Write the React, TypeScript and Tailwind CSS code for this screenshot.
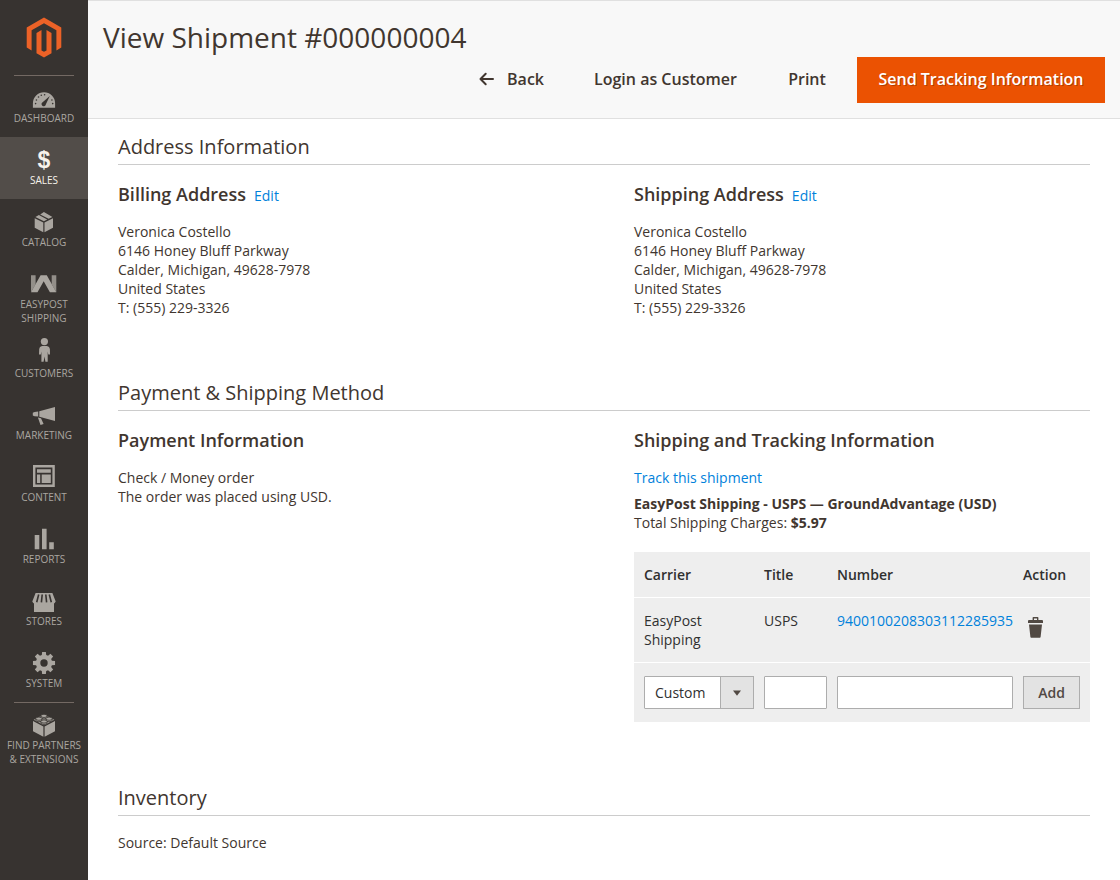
import type { ReactNode } from "react";

type NavItem = { label: string; icon: ReactNode; active?: boolean; divided?: boolean };

function Icon({ children }: { children: ReactNode }) {
  return (
    <svg viewBox="0 0 28 26" className="h-[26px] w-7 shrink-0 overflow-visible" fill="currentColor" aria-hidden="true">
      {children}
    </svg>
  );
}

const gearPath = (() => {
  const points: string[] = [];
  for (let i = 0; i < 8; i++) {
    const base = (i * Math.PI) / 4;
    const corners: [number, number][] = [
      [-0.27, 8.2],
      [-0.17, 11.2],
      [0.17, 11.2],
      [0.27, 8.2],
    ];
    for (const [offset, radius] of corners) {
      points.push(`${(14 + radius * Math.sin(base + offset)).toFixed(2)} ${(13 - radius * Math.cos(base + offset)).toFixed(2)}`);
    }
  }
  return `M${points.join("L")}Z M14 9.3a3.7 3.7 0 1 0 0 7.4a3.7 3.7 0 0 0 0-7.4Z`;
})();

const navItems: NavItem[] = [
  {
    label: "Dashboard",
    icon: (
      <Icon>
        <path d="M2.9 22.7V18.3a11.1 11.1 0 0 1 22.2 0V22.7Z" />
        <g className="fill-[#373330]">
          <circle cx="5.6" cy="18.6" r="0.8" />
          <circle cx="6.4" cy="15" r="0.8" />
          <circle cx="8.5" cy="12" r="0.8" />
          <circle cx="11.3" cy="10.3" r="0.8" />
          <circle cx="14.6" cy="9.8" r="0.8" />
          <circle cx="21.9" cy="15" r="0.8" />
          <circle cx="22.7" cy="18.6" r="0.8" />
          <path d="M19.8 10.9L15.9 19.2a2.2 2.2 0 1 1-3.3-2Z" />
        </g>
      </Icon>
    ),
  },
  {
    label: "Sales",
    active: true,
    icon: (
      <span aria-hidden="true" className="h-[26px] font-['Liberation_Sans',sans-serif] text-[23px] leading-[26px] font-bold text-[#f7f3eb]">
        $
      </span>
    ),
  },
  {
    label: "Catalog",
    icon: (
      <Icon>
        <path d="M4.7 9.3L13.3 13.6V23.2L4.7 18.8Z M14.5 13.6L23 9.3V18.8L14.5 23.2Z" />
        <path d="M5.4 7.9L8.9 6.1L17.2 10.5L13.9 12.2Z M10.2 5.4L13.9 3L22.4 7.9L18.6 9.8Z" />
      </Icon>
    ),
  },
  {
    label: "EasyPost Shipping",
    icon: (
      <Icon>
        <path opacity="0.8" d="M1 4.3H5.6V13.2L1 21.3Z M26.3 4.3H21.7V13.2L26.3 21.3Z" />
        <path d="M1 21.3L10.6 4.3H16.8L26.3 21.3H19.9L13.7 10.2L7.5 21.3Z" />
      </Icon>
    ),
  },
  {
    label: "Customers",
    icon: (
      <Icon>
        <circle cx="14.4" cy="1.6" r="3.6" />
        <path d="M12 6H17Q19.6 6.3 19.9 9L20 14.5H18.3L17.7 11.5V21.7H15.4L14.5 16.5L13.6 21.7H11.4V11.5L10.8 14.5H9L9.2 9Q9.4 6.3 12 6Z" />
      </Icon>
    ),
  },
  {
    label: "Marketing",
    icon: (
      <Icon>
        <path d="M9.3 9.3L25 5V19L9.3 14.8Z M8.2 9.6V14.6L4.6 14.3L2.8 13.4V10.8L4.6 9.9Z M7.9 15.6L11 16.3L13.6 22L10.5 23Z" />
      </Icon>
    ),
  },
  {
    label: "Content",
    icon: (
      <Icon>
        <path fillRule="evenodd" d="M3 1H24.8V23H3Z M5.4 3.4V20.6H22.4V3.4Z" />
        <path d="M7 5.2H20.8V8.8H7Z M7 10.4H10.2V18.9H7Z M11.7 10.4H20.8V18.9H11.7Z" />
      </Icon>
    ),
  },
  {
    label: "Reports",
    icon: (
      <Icon>
        <path d="M4.7 9H9.3V23.3H4.7Z M12 2.7H16.6V23.3H12Z M19.2 16.3H23.8V23.3H19.2Z" />
      </Icon>
    ),
  },
  {
    label: "Stores",
    icon: (
      <Icon>
        <path d="M5.6 5H22.4L25.7 13.5Q24.5 15.4 24 15.5V24H4V15.5Q3 15.1 2.3 13.5Z" />
        <path
          className="stroke-[#373330]"
          fill="none"
          strokeWidth="1.6"
          d="M8.7 6.5L6.7 14.3M12.2 6.5L11.4 14.3M15.8 6.5L16.6 14.3M19.3 6.5L21.3 14.3"
        />
      </Icon>
    ),
  },
  {
    label: "System",
    icon: (
      <Icon>
        <path fillRule="evenodd" d={gearPath} />
      </Icon>
    ),
  },
  {
    label: "Find Partners & Extensions",
    divided: true,
    icon: (
      <Icon>
        <path d="M3 9L13.4 14.5V24.7L3 19.2Z M14.6 14.5L25 9V19.2L14.6 24.7Z" />
        <path d="M3.7 7.8L14 2.4L24.3 7.8L14 13.2Z" />
        <g className="stroke-[#373330]" strokeWidth="0.8">
          <path d="M10.9 4v1.3a3.1 1.6 0 0 0 6.2 0V4Z M5.8 6.8v1.3a3.1 1.6 0 0 0 6.2 0V6.8Z M16 6.8v1.3a3.1 1.6 0 0 0 6.2 0V6.8Z M10.9 9.6v1.3a3.1 1.6 0 0 0 6.2 0V9.6Z" />
          <ellipse cx="14" cy="3.9" rx="3.1" ry="1.6" />
          <ellipse cx="8.9" cy="6.7" rx="3.1" ry="1.6" />
          <ellipse cx="19.1" cy="6.7" rx="3.1" ry="1.6" />
          <ellipse cx="14" cy="9.5" rx="3.1" ry="1.6" />
        </g>
      </Icon>
    ),
  },
];

function Sidebar() {
  return (
    <nav aria-label="Main menu" className="w-[88px] shrink-0 bg-[#373330]">
      <a href="#home" aria-label="Magento" className="flex h-[75px] justify-center pt-[17px]">
        <svg viewBox="0 0 36 41" className="h-[41px] w-9" aria-hidden="true">
          <path
            className="fill-[#ec6227]"
            d="M18 0.5L35.3 10.5V30.5L30.4 33.4V13.3L18 6.2L5.6 13.3V33.4L0.7 30.5V10.5Z M15.5 13V33.4L18 34.8L20.5 33.4V13L25.5 16V36.2L18 40.6L10.5 36.2V16Z"
          />
        </svg>
      </a>
      <ul>
        {navItems.map((item) => (
          <li key={item.label} className="relative">
            {(item.divided || item.label === "Dashboard") && (
              <span className="absolute inset-x-3.5 top-0 h-px bg-[#736963]" />
            )}
            <a
              href={"#" + item.label.toLowerCase().replace(/\W+/g, "-")}
              className={
                item.active
                  ? "flex min-h-[62px] flex-col items-center bg-[#524d49] px-1 pt-2.5 pb-[5px] text-[#f7f3eb]"
                  : "flex min-h-[62px] flex-col items-center px-1 pt-2.5 pb-[5px] text-[#aaa6a0]"
              }
            >
              {item.icon}
              <span className="text-center text-[10px] leading-[14px] uppercase">{item.label}</span>
            </a>
          </li>
        ))}
      </ul>
    </nav>
  );
}

function Section({ title, children }: { title: string; children: ReactNode }) {
  return (
    <section>
      <h2 className="mb-[17px] border-b border-[#cccccc] pb-1 text-xl leading-[26px]">{title}</h2>
      {children}
    </section>
  );
}

function Block({ title, edit, children }: { title: string; edit?: string; children: ReactNode }) {
  return (
    <div className="min-w-0">
      <div className="mb-4 flex items-baseline gap-2">
        <h3 className="text-lg leading-6 font-semibold">{title}</h3>
        {edit && (
          <a href={edit} className="text-[#0081db]">
            Edit
          </a>
        )}
      </div>
      {children}
    </div>
  );
}

function Address() {
  return (
    <address className="not-italic">
      Veronica Costello
      <br />
      6146 Honey Bluff Parkway
      <br />
      Calder, Michigan, 49628-7978
      <br />
      United States
      <br />
      T: (555) 229-3326
    </address>
  );
}

function TrackingTable() {
  return (
    <table className="mt-5 w-full table-fixed bg-[#eeeeee] text-left text-[#303030]">
      <colgroup>
        <col className="w-[120px]" />
        <col className="w-[73px]" />
        <col />
        <col className="w-[77px]" />
      </colgroup>
      <thead>
        <tr className="border-b border-white">
          <th className="py-[13px] pl-2.5 font-semibold">Carrier</th>
          <th className="py-[13px] pl-2.5 font-semibold">Title</th>
          <th className="py-[13px] pl-2.5 font-semibold">Number</th>
          <th className="py-[13px] pl-2.5 font-semibold">Action</th>
        </tr>
      </thead>
      <tbody>
        <tr className="border-b border-white align-top">
          <td className="py-[13px] pr-5 pl-2.5">EasyPost Shipping</td>
          <td className="py-[13px] pl-2.5">USPS</td>
          <td className="py-[13px] pl-2.5">
            <a href="#track" className="text-[#0081db]">
              9400100208303112285935
            </a>
          </td>
          <td className="py-[13px] pl-2.5">
            <button type="button" aria-label="Delete" className="block px-[5px] pt-1.5">
              <svg viewBox="0 0 15 21" className="h-[21px] w-[15px] fill-[#514943]" aria-hidden="true">
                <path
                  fillRule="evenodd"
                  d="M4.6 3V0.8Q4.6 0 5.4 0H9.6Q10.4 0 10.4 0.8V3H14Q15 3 15 4V5.9H0V4Q0 3 1 3Z M6 1.4V3H9V1.4Z M1 7.6H14L12.6 20Q12.5 20.7 11.8 20.7H3.2Q2.5 20.7 2.4 20Z"
                />
              </svg>
            </button>
          </td>
        </tr>
        <tr>
          <td className="py-[13px] pl-2.5">
            <div className="relative">
              <select
                aria-label="Carrier"
                className="block h-[33px] w-full appearance-none rounded-[1px] border border-[#adadad] bg-white pr-9 pl-2.5"
              >
                <option>Custom</option>
              </select>
              <span className="pointer-events-none absolute inset-y-0 right-0 flex w-[34px] items-center justify-center border border-[#adadad] bg-[#e3e3e3]">
                <svg viewBox="0 0 8 6" className="h-1.5 w-2 fill-[#514943]" aria-hidden="true">
                  <path d="M0 0.5H8L4 5.7Z" />
                </svg>
              </span>
            </div>
          </td>
          <td className="py-[13px] pl-2.5">
            <input aria-label="Title" className="block h-[33px] w-full rounded-[1px] border border-[#adadad] bg-white px-2.5" />
          </td>
          <td className="py-[13px] pl-2.5">
            <input aria-label="Number" className="block h-[33px] w-full rounded-[1px] border border-[#adadad] bg-white px-2.5" />
          </td>
          <td className="px-2.5 py-[13px]">
            <button type="button" className="block h-[33px] w-full border border-[#adadad] bg-[#e3e3e3] font-semibold text-[#514943]">
              Add
            </button>
          </td>
        </tr>
      </tbody>
    </table>
  );
}

export default function App() {
  return (
    <div className="flex min-h-screen bg-white font-['Open_Sans',sans-serif] text-sm leading-[19px] text-[#41362f]">
      <Sidebar />
      <div className="min-w-0 flex-1">
        <header className="border-y border-[#e0e0e0] bg-[#f8f8f8] px-[15px] pt-[17px] pb-[15px]">
          <h1 className="mb-px text-[28px] leading-[38px]">View Shipment #000000004</h1>
          <div className="flex flex-wrap justify-end gap-[13px] text-base leading-[22px] font-semibold">
            <button type="button" className="flex h-[46px] items-center gap-[13px] px-[17px] pb-0.5">
              <svg viewBox="0 0 15 14" className="h-3.5 w-[15px]" fill="none" stroke="currentColor" strokeWidth="2" aria-hidden="true">
                <path strokeLinecap="round" strokeLinejoin="round" d="M14 7H1.5M6.7 1.8L1.5 7L6.7 12.2" />
              </svg>
              Back
            </button>
            <button type="button" className="h-[46px] min-w-[183px] px-[17px] pb-0.5">
              Login as Customer
            </button>
            <button type="button" className="h-[46px] min-w-[74px] px-[17px] pb-0.5">
              Print
            </button>
            <button
              type="button"
              className="h-[46px] min-w-[248px] bg-[#eb5202] px-[17px] pb-0.5 text-white [text-shadow:1px_1px_0_rgba(0,0,0,0.25)]"
            >
              Send Tracking Information
            </button>
          </div>
        </header>
        <main className="flex flex-col gap-[63px] px-[30px] pt-[15px] pb-[27px]">
          <Section title="Address Information">
            <div className="grid grid-cols-2 gap-[60px]">
              <Block title="Billing Address" edit="#edit-billing">
                <Address />
              </Block>
              <Block title="Shipping Address" edit="#edit-shipping">
                <Address />
              </Block>
            </div>
          </Section>
          <Section title="Payment & Shipping Method">
            <div className="grid grid-cols-2 gap-[60px]">
              <Block title="Payment Information">
                <p>Check / Money order</p>
                <p>The order was placed using USD.</p>
              </Block>
              <Block title="Shipping and Tracking Information">
                <a href="#track" className="mb-[7px] block text-[#0081db]">
                  Track this shipment
                </a>
                <p className="font-bold">EasyPost Shipping - USPS — GroundAdvantage (USD)</p>
                <p>
                  Total Shipping Charges: <strong>$5.97</strong>
                </p>
                <TrackingTable />
              </Block>
            </div>
          </Section>
          <Section title="Inventory">
            <p>Source: Default Source</p>
          </Section>
        </main>
      </div>
    </div>
  );
}
